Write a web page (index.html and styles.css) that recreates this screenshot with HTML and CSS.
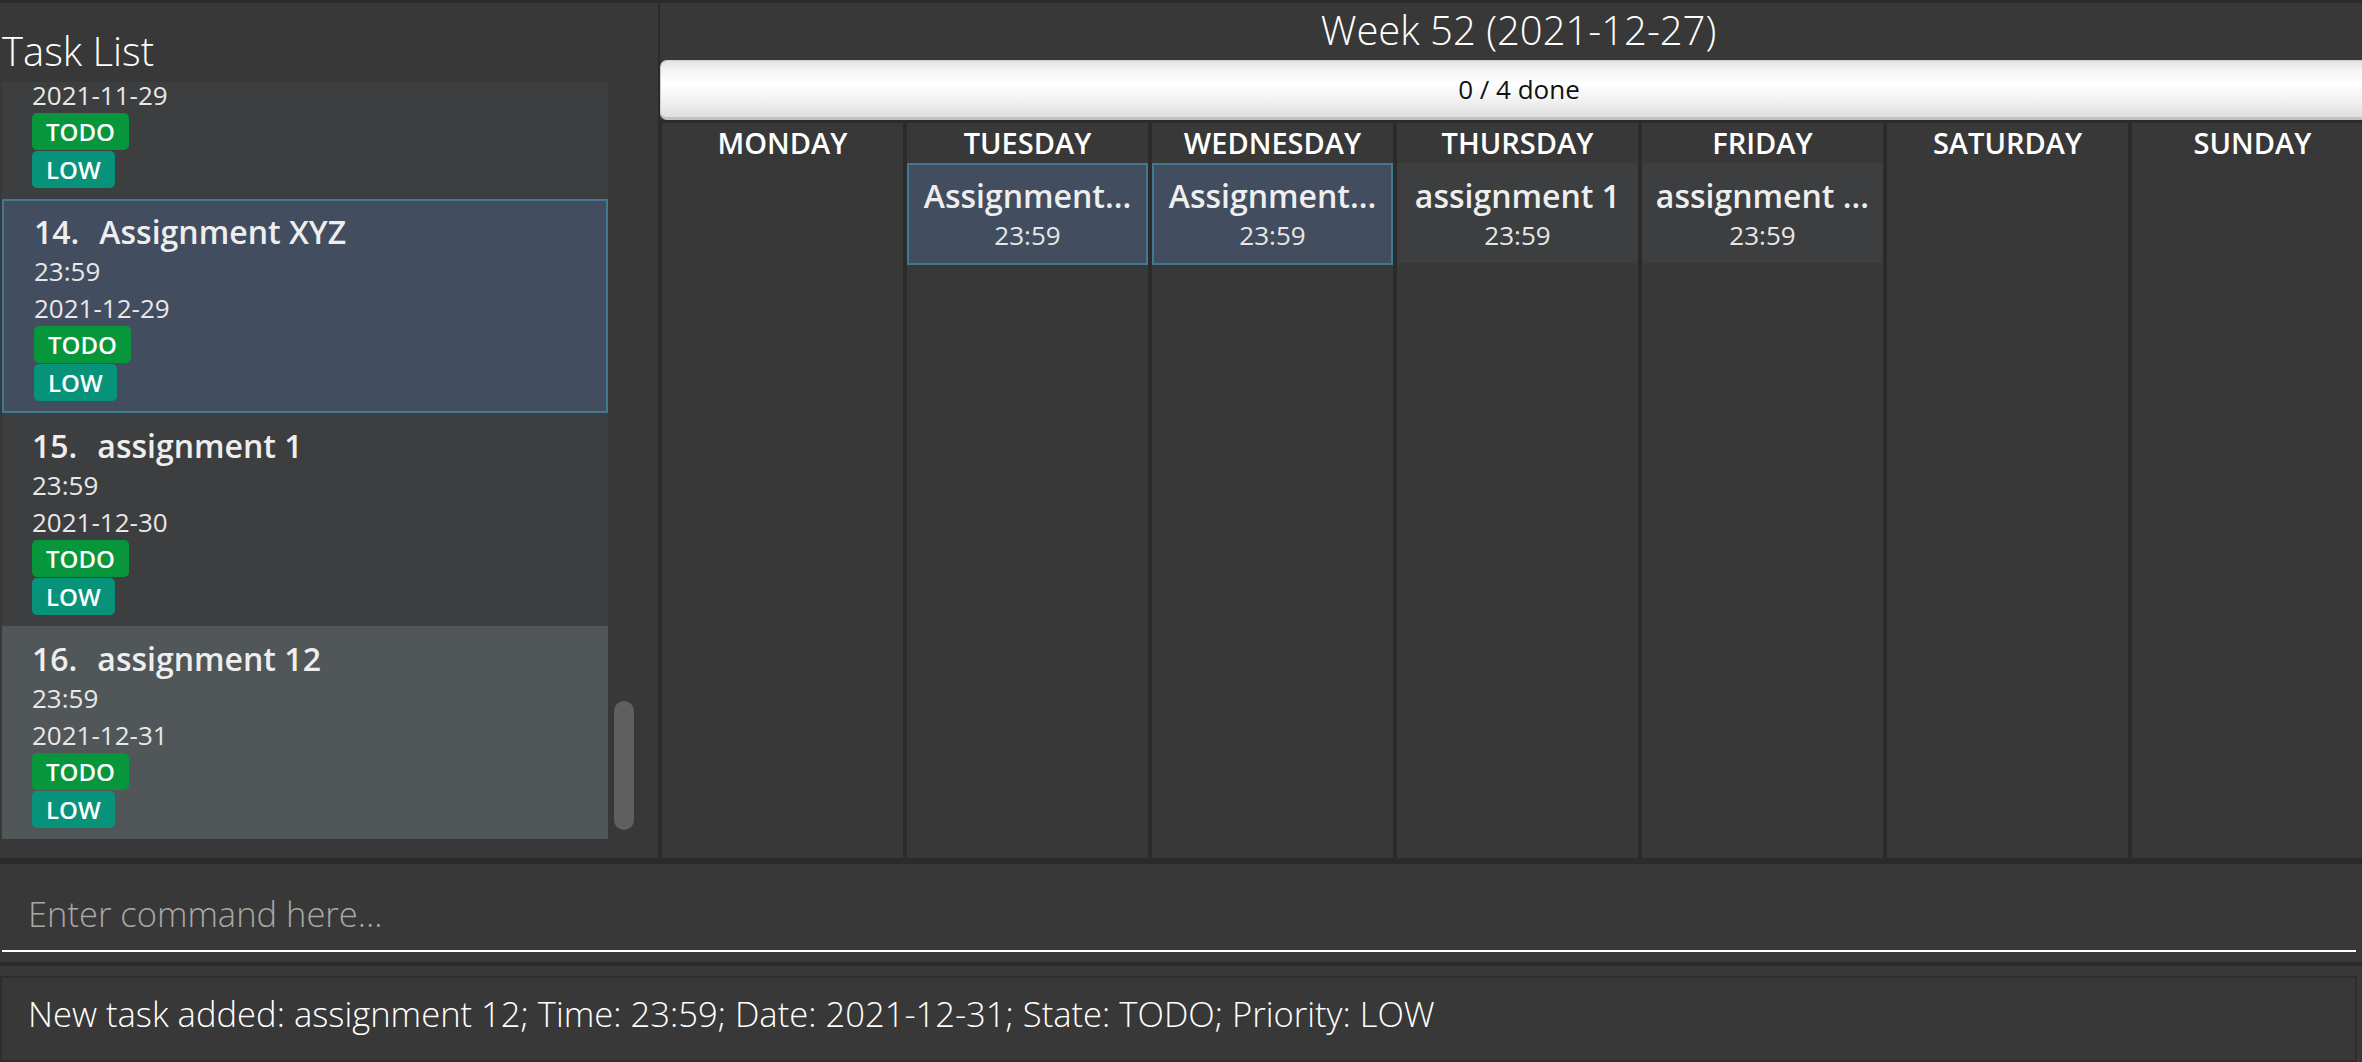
FILE: index.html
```html
<!DOCTYPE html>
<html lang="en">
<head>
<meta charset="utf-8">
<title>Task List</title>
<link rel="stylesheet" href="styles.css">
</head>
<body>
<div class="app">
  <div class="main">
    <section class="left">
      <h1 class="panel-title">Task List</h1>
      <div class="list-viewport">
        <ul class="task-list">
          <li class="cell even partial">
            <div class="cell-line">2021-11-29</div>
            <span class="tag todo">TODO</span>
            <span class="tag low">LOW</span>
          </li>
          <li class="cell selected">
            <div class="cell-title"><span class="idx">14.</span>Assignment XYZ</div>
            <div class="cell-line">23:59</div>
            <div class="cell-line">2021-12-29</div>
            <span class="tag todo">TODO</span>
            <span class="tag low">LOW</span>
          </li>
          <li class="cell even">
            <div class="cell-title"><span class="idx">15.</span>assignment 1</div>
            <div class="cell-line">23:59</div>
            <div class="cell-line">2021-12-30</div>
            <span class="tag todo">TODO</span>
            <span class="tag low">LOW</span>
          </li>
          <li class="cell odd">
            <div class="cell-title"><span class="idx">16.</span>assignment 12</div>
            <div class="cell-line">23:59</div>
            <div class="cell-line">2021-12-31</div>
            <span class="tag todo">TODO</span>
            <span class="tag low">LOW</span>
          </li>
        </ul>
        <div class="scroll-track"><div class="scroll-thumb"></div></div>
      </div>
    </section>
    <section class="right">
      <h2 class="week-title">Week 52 (2021-12-27)</h2>
      <div class="progress"><span>0 / 4 done</span></div>
      <div class="week-grid">
        <div class="day">
          <div class="day-name">MONDAY</div>
        </div>
        <div class="day">
          <div class="day-name">TUESDAY</div>
          <div class="event selected">
            <div class="event-title">Assignment...</div>
            <div class="event-time">23:59</div>
          </div>
        </div>
        <div class="day">
          <div class="day-name">WEDNESDAY</div>
          <div class="event selected">
            <div class="event-title">Assignment...</div>
            <div class="event-time">23:59</div>
          </div>
        </div>
        <div class="day">
          <div class="day-name">THURSDAY</div>
          <div class="event">
            <div class="event-title">assignment 1</div>
            <div class="event-time">23:59</div>
          </div>
        </div>
        <div class="day">
          <div class="day-name">FRIDAY</div>
          <div class="event">
            <div class="event-title">assignment ...</div>
            <div class="event-time">23:59</div>
          </div>
        </div>
        <div class="day">
          <div class="day-name">SATURDAY</div>
        </div>
        <div class="day">
          <div class="day-name">SUNDAY</div>
        </div>
      </div>
    </section>
  </div>
  <div class="command">
    <div class="command-field">Enter command here...</div>
  </div>
  <div class="result">
    <div class="result-box">New task added: assignment 12; Time: 23:59; Date: 2021-12-31; State: TODO; Priority: LOW</div>
  </div>
</div>
</body>
</html>
```

FILE: styles.css
```css
html, body {
  margin: 0;
  padding: 0;
}

body {
  width: 2362px;
  height: 1062px;
  overflow: hidden;
  background: #2b2b2b;
  font-family: "Open Sans", "Noto Sans", "DejaVu Sans", sans-serif;
  color: #ffffff;
}

.app {
  display: flex;
  flex-direction: column;
  height: 1062px;
  padding-top: 3px;
  box-sizing: border-box;
}

.main {
  display: flex;
  gap: 2px;
  height: 855px;
  flex: 0 0 855px;
  overflow: hidden;
}

/* ---------- left panel ---------- */
.left {
  flex: 0 0 658px;
  width: 658px;
  background: #383838;
  display: flex;
  flex-direction: column;
}

.panel-title {
  margin: 0 0 4px;
  padding: 21px 0 0 2px;
  font-size: 40px;
  font-weight: 300;
  line-height: 54px;
  color: #ffffff;
}

.list-viewport {
  flex: 1;
  display: flex;
  overflow: hidden;
  padding-left: 2px;
}

.task-list {
  list-style: none;
  margin: 0;
  padding: 0;
  flex: 0 0 606px;
  width: 606px;
  align-self: flex-start;
}

.cell {
  padding: 12px 30px 10px;
}

.cell.partial {
  padding-top: 0;
}

.cell.partial .cell-line {
  line-height: 26px;
  margin-bottom: 5px;
}

.cell.even {
  background: #3c3e3f;
}

.cell.odd {
  background: #515658;
}

.cell.selected {
  background: #424d5f;
  border: 2px solid #3e7b91;
  padding: 10px 30px 9px;
}

.cell-title {
  font-size: 32px;
  font-weight: 600;
  line-height: 42px;
  color: #eeeeee;
  white-space: nowrap;
}

.idx {
  margin-right: 20px;
}

.cell-line {
  font-size: 26px;
  line-height: 36.5px;
  color: #e8e8e8;
}

.tag {
  display: block;
  width: fit-content;
  height: 37px;
  margin-bottom: 1px;
  padding: 0 14px;
  box-sizing: border-box;
  border-radius: 5px;
  font-size: 24px;
  font-weight: 600;
  line-height: 37px;
  color: #ffffff;
}

.tag.todo {
  background: #07963c;
}

.tag.low {
  background: #07937a;
}

.scroll-track {
  padding-left: 6px;
}

.scroll-thumb {
  width: 20px;
  height: 129px;
  margin-top: 619px;
  border-radius: 10px;
  background: #5f5f5f;
}

/* ---------- right panel ---------- */
.right {
  flex: 0 0 1717px;
  width: 1717px;
  background: #383838;
  display: flex;
  flex-direction: column;
}

.week-title {
  margin: 0 0 3px;
  text-align: center;
  font-size: 40px;
  font-weight: 300;
  line-height: 54px;
  color: #ffffff;
}

.progress {
  height: 60px;
  flex: 0 0 60px;
  box-sizing: border-box;
  border-radius: 7px;
  border-top: 1px solid #cfcfcf;
  border-left: 1px solid #cccccc;
  border-bottom: 3px solid #c2c2c2;
  background: linear-gradient(#e4e4e4, #f6f6f6 20%, #ffffff 40%, #f2f2f2 70%, #e0e0e0 100%);
  display: flex;
  align-items: center;
  justify-content: center;
  font-size: 26px;
  color: #111111;
}

.week-grid {
  flex: 1;
  display: grid;
  grid-template-columns: repeat(7, 241px);
  column-gap: 4px;
  padding: 3px 0 0 2px;
  background: #2b2b2b;
}

.day {
  background: #383838;
  display: flex;
  flex-direction: column;
}

.day-name {
  text-align: center;
  font-size: 29px;
  font-weight: 600;
  line-height: 40px;
  color: #ffffff;
}

.event {
  background: #3c3e3f;
  text-align: center;
  padding: 12px 6px 10px;
}

.event.selected {
  background: #424d5f;
  border: 2px solid #3e7b91;
  padding: 10px 6px 10px;
}

.event-title {
  font-size: 32px;
  font-weight: 600;
  line-height: 42px;
  white-space: nowrap;
  color: #eeeeee;
}

.event-time {
  font-size: 26px;
  line-height: 36px;
  color: #e6e6e6;
}

/* ---------- command & result ---------- */
.command {
  margin-top: 6px;
  height: 98px;
  flex: 0 0 98px;
  box-sizing: border-box;
  background: #383838;
  padding: 0 6px 10px 2px;
}

.command-field {
  height: 88px;
  box-sizing: border-box;
  border-bottom: 2px solid #ffffff;
  padding: 25px 0 0 26px;
  font-size: 34.5px;
  font-weight: 300;
  line-height: 50px;
  color: #a8a8a8;
}

.result {
  margin-top: 4px;
  flex: 1;
  background: #383838;
  padding: 10px 5px 0 0;
  display: flex;
}

.result-box {
  flex: 1;
  border: 2px solid #2e2e2e;
  padding: 12px 0 0 26px;
  font-size: 34.6px;
  font-weight: 300;
  line-height: 48px;
  color: #ffffff;
}
```
